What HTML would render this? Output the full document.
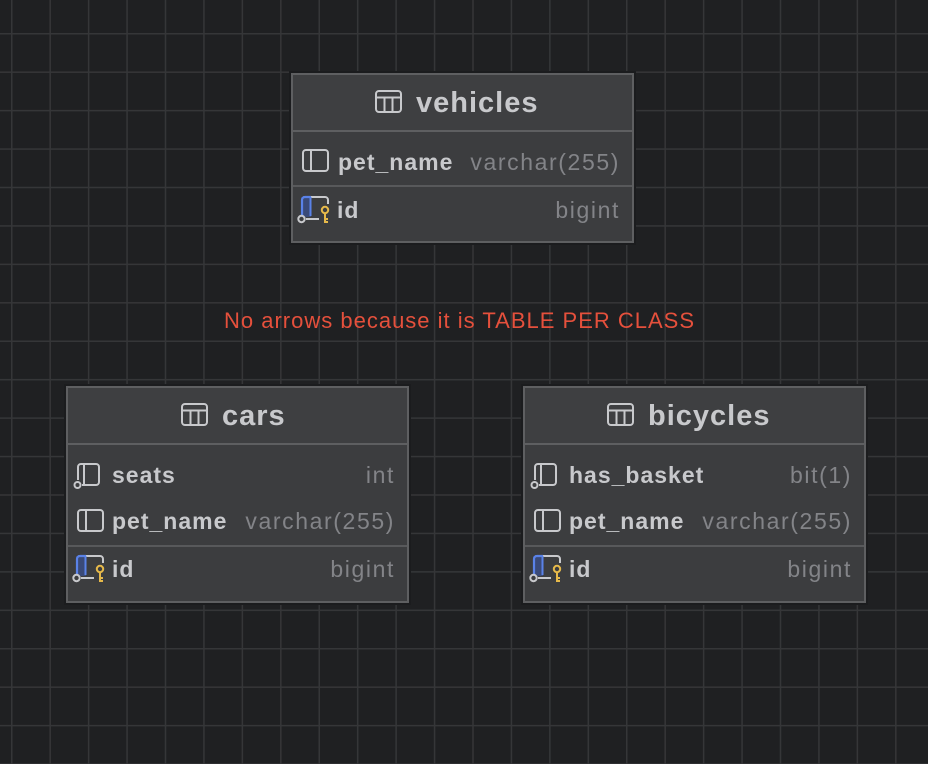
<!DOCTYPE html>
<html><head><meta charset="utf-8"><style>
*{margin:0;padding:0;box-sizing:border-box}
body{width:928px;height:764px;overflow:hidden;position:relative;font-family:"Liberation Sans",sans-serif;
background-color:#1f2022;
background-image:linear-gradient(to right,#353638 0,#353638 1.6px,transparent 1.6px),linear-gradient(to bottom,#353638 0,#353638 1.6px,transparent 1.6px);
background-size:38.45px 38.45px;background-position:11px 33px;}
.t{position:absolute;background:#3c3d3f;border:2px solid #5e5f61;box-shadow:0 0 0 2px #1b1c1e;}
.hd{position:absolute;left:0;right:0;top:0;background:#3e3f41;border-bottom:2px solid #5e5f61;}
.ttl{position:absolute;font-weight:bold;font-size:29px;letter-spacing:1px;color:#c8c9cc;line-height:1;}
.sep{position:absolute;left:0;right:0;height:2px;background:#58595b;}
.n{position:absolute;font-weight:bold;font-size:23px;letter-spacing:1px;color:#c8c9cc;line-height:1;}
.ty{position:absolute;font-size:23px;letter-spacing:1.6px;color:#838488;line-height:1;text-align:right;}
svg{position:absolute;overflow:visible}
.red{position:absolute;left:224px;top:310px;font-size:22px;letter-spacing:1px;color:#e5503c;line-height:1;white-space:nowrap}
</style></head><body>

<svg width="0" height="0" style="position:absolute">
<defs>
<g id="tbl"><rect x="1" y="1" width="25" height="21" rx="3" fill="none" stroke="#c8c9cc" stroke-width="2"/><line x1="1" y1="7.5" x2="26" y2="7.5" stroke="#c8c9cc" stroke-width="2"/><line x1="9.5" y1="7" x2="9.5" y2="22" stroke="#c8c9cc" stroke-width="2"/><line x1="17.5" y1="7" x2="17.5" y2="22" stroke="#c8c9cc" stroke-width="2"/></g>
<g id="col"><rect x="1" y="1" width="25" height="21" rx="3" fill="none" stroke="#c8c9cc" stroke-width="2"/><line x1="9" y1="1" x2="9" y2="22" stroke="#c8c9cc" stroke-width="2"/></g>
<g id="coln"><path d="M5 17 V4 a3 3 0 0 1 3 -3 H23 a3 3 0 0 1 3 3 V19 a3 3 0 0 1 -3 3 H9" fill="none" stroke="#c8c9cc" stroke-width="2"/><line x1="11" y1="1" x2="11" y2="22" stroke="#c8c9cc" stroke-width="2"/><circle cx="4.5" cy="22" r="3" fill="none" stroke="#c8c9cc" stroke-width="2"/></g>
<g id="key"><path d="M5 17 V4 a3 3 0 0 1 3 -3 H28 a3 3 0 0 1 3 3 V8" fill="none" stroke="#c8c9cc" stroke-width="2"/><path d="M9 23 H22" stroke="#c8c9cc" stroke-width="2"/><rect x="4" y="1" width="10" height="20" fill="#3a4a78"/><path d="M5 20 V4 a3 3 0 0 1 3 -3 H14" fill="none" stroke="#5a82e8" stroke-width="2.2"/><line x1="13.5" y1="1" x2="13.5" y2="20" stroke="#5a82e8" stroke-width="2"/><circle cx="4.5" cy="23" r="3.2" fill="none" stroke="#c8c9cc" stroke-width="2"/><circle cx="28" cy="14" r="3.2" fill="none" stroke="#e6b94a" stroke-width="2"/><path d="M28 17 V27 M28 23 H31 M28 26 H31" stroke="#e6b94a" stroke-width="2"/></g>
</defs></svg>

<!-- vehicles -->
<div class="t" style="left:291px;top:73px;width:343px;height:170px">
<div class="hd" style="height:57px"></div>
<div class="sep" style="top:110px"></div>
</div>
<svg style="left:375px;top:90px" width="28" height="24"><use href="#tbl"/></svg>
<div class="ttl" style="left:416px;top:89px">vehicles</div>
<svg style="left:302px;top:149px" width="28" height="24"><use href="#col"/></svg>
<div class="n" style="left:338px;top:151px">pet_name</div>
<div class="ty" style="right:308px;top:151px">varchar(255)</div>
<svg style="left:297px;top:196px" width="34" height="28"><use href="#key"/></svg>
<div class="n" style="left:337px;top:199px">id</div>
<div class="ty" style="right:308px;top:199px">bigint</div>

<div class="red">No arrows because it is TABLE PER CLASS</div>

<!-- cars -->
<div class="t" style="left:66px;top:386px;width:343px;height:217px">
<div class="hd" style="height:57px"></div>
<div class="sep" style="top:157px"></div>
</div>
<svg style="left:181px;top:403px" width="28" height="24"><use href="#tbl"/></svg>
<div class="ttl" style="left:222px;top:402px">cars</div>
<svg style="left:73px;top:463px" width="34" height="28"><use href="#coln"/></svg>
<div class="n" style="left:112px;top:464px">seats</div>
<div class="ty" style="right:533px;top:464px">int</div>
<svg style="left:77px;top:509px" width="28" height="24"><use href="#col"/></svg>
<div class="n" style="left:112px;top:510px">pet_name</div>
<div class="ty" style="right:533px;top:510px">varchar(255)</div>
<svg style="left:72px;top:555px" width="34" height="28"><use href="#key"/></svg>
<div class="n" style="left:112px;top:558px">id</div>
<div class="ty" style="right:533px;top:558px">bigint</div>

<!-- bicycles -->
<div class="t" style="left:523px;top:386px;width:343px;height:217px">
<div class="hd" style="height:57px"></div>
<div class="sep" style="top:157px"></div>
</div>
<svg style="left:607px;top:403px" width="28" height="24"><use href="#tbl"/></svg>
<div class="ttl" style="left:648px;top:402px">bicycles</div>
<svg style="left:530px;top:463px" width="34" height="28"><use href="#coln"/></svg>
<div class="n" style="left:569px;top:464px">has_basket</div>
<div class="ty" style="right:76px;top:464px">bit(1)</div>
<svg style="left:534px;top:509px" width="28" height="24"><use href="#col"/></svg>
<div class="n" style="left:569px;top:510px">pet_name</div>
<div class="ty" style="right:76px;top:510px">varchar(255)</div>
<svg style="left:529px;top:555px" width="34" height="28"><use href="#key"/></svg>
<div class="n" style="left:569px;top:558px">id</div>
<div class="ty" style="right:76px;top:558px">bigint</div>

</body></html>
